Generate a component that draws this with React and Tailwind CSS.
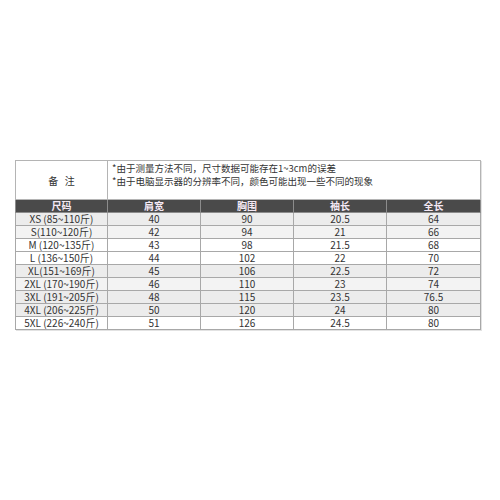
const rows = [
  { size: "XS (85~110斤)", a: "40", b: "90", c: "20.5", d: "64", bg: "bg-[#ececec]" },
  { size: "S(110~120斤)", a: "42", b: "94", c: "21", d: "66", bg: "bg-[#f3f3f3]" },
  { size: "M (120~135斤)", a: "43", b: "98", c: "21.5", d: "68", bg: "bg-white" },
  { size: "L (136~150斤)", a: "44", b: "102", c: "22", d: "70", bg: "bg-white" },
  { size: "XL(151~169斤)", a: "45", b: "106", c: "22.5", d: "72", bg: "bg-[#ececec]" },
  { size: "2XL (170~190斤)", a: "46", b: "110", c: "23", d: "74", bg: "bg-[#f3f3f3]" },
  { size: "3XL (191~205斤)", a: "48", b: "115", c: "23.5", d: "76.5", bg: "bg-[#ececec]" },
  { size: "4XL (206~225斤)", a: "50", b: "120", c: "24", d: "80", bg: "bg-[#ececec]" },
  { size: "5XL (226~240斤)", a: "51", b: "126", c: "24.5", d: "80", bg: "bg-white" },
];

const headers = ["尺码", "肩宽", "胸围", "袖长", "全长"];

const App = () => {
  return (
    <div
      className="w-[500px] h-[500px] bg-white pt-[160px] pl-[15px]"
      style={{ fontFamily: '"Noto Sans CJK SC", "Liberation Sans", sans-serif' }}
    >
      <table className="w-[465px] table-fixed border-collapse text-[10px] leading-[12px] text-[#333] shadow-[1px_1px_0_#e2e2e2]">
        <colgroup>
          <col className="w-[92px]" />
          <col className="w-[93px]" />
          <col className="w-[93px]" />
          <col className="w-[93px]" />
          <col className="w-[94px]" />
        </colgroup>
        <tbody>
          {/* remark row */}
          <tr className="h-[39px]">
            <td className="border border-[#b4b4b4] text-center align-middle text-[10px]">
              <span className="pt-[2px] inline-block">备&nbsp;&nbsp;&nbsp;注</span>
            </td>
            <td colSpan={4} className="border border-[#b4b4b4] pl-[4px] align-top pt-[1px] text-[9.5px] leading-[13px]">
              <div>*由于测量方法不同，尺寸数据可能存在1~3cm的误差</div>
              <div>*由于电脑显示器的分辨率不同，颜色可能出现一些不同的现象</div>
            </td>
          </tr>

          {/* header */}
          <tr className="h-[13px] bg-[#4a4a4a]">
            {headers.map((h) => (
              <td
                key={h}
                className="border border-[#8c8c8c] text-center font-bold text-[#f4e8f4] p-0"
              >
                {h}
              </td>
            ))}
          </tr>

          {rows.map((r) => (
            <tr key={r.size} className={`h-[13px] ${r.bg}`}>
              <td className="border border-[#a8a8a8] text-center p-0">{r.size}</td>
              <td className="border border-[#a8a8a8] text-center p-0">{r.a}</td>
              <td className="border border-[#a8a8a8] text-center p-0">{r.b}</td>
              <td className="border border-[#a8a8a8] text-center p-0">{r.c}</td>
              <td className="border border-[#a8a8a8] text-center p-0">{r.d}</td>
            </tr>
          ))}
        </tbody>
      </table>
    </div>
  );
};

export default App;
